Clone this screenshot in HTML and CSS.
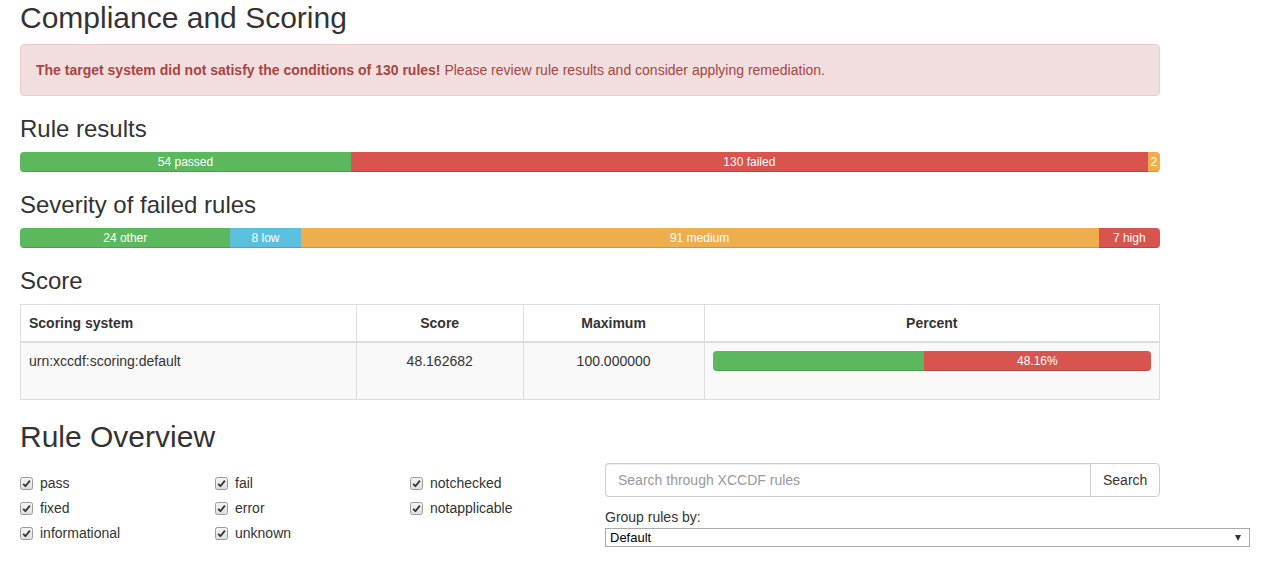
FILE: index.html
```html
<!DOCTYPE html>
<html lang="en">
<head>
<meta charset="utf-8">
<title>Compliance and Scoring</title>
<link rel="stylesheet" href="styles.css">
</head>
<body>
<main class="page">
  <h2 class="title first">Compliance and Scoring</h2>
  <div class="alert"><strong>The target system did not satisfy the conditions of 130 rules!</strong> Please review rule results and consider applying remediation.</div>

  <h3 class="subtitle">Rule results</h3>
  <div class="progress">
    <div class="bar success" style="width: 29.032%">54 passed</div>
    <div class="bar danger" style="width: 69.892%">130 failed</div>
    <div class="bar warning" style="width: 1.076%">2</div>
  </div>

  <h3 class="subtitle">Severity of failed rules</h3>
  <div class="progress">
    <div class="bar success" style="width: 18.462%">24 other</div>
    <div class="bar info" style="width: 6.154%">8 low</div>
    <div class="bar warning" style="width: 70%">91 medium</div>
    <div class="bar danger" style="width: 5.385%">7 high</div>
  </div>

  <h3 class="subtitle">Score</h3>
  <table class="score-table">
    <thead>
      <tr>
        <th class="c-system">Scoring system</th>
        <th class="c-score center">Score</th>
        <th class="c-max center">Maximum</th>
        <th class="c-pct center">Percent</th>
      </tr>
    </thead>
    <tbody>
      <tr>
        <td>urn:xccdf:scoring:default</td>
        <td class="center">48.162682</td>
        <td class="center">100.000000</td>
        <td>
          <div class="progress in-cell">
            <div class="bar success" style="width: 48.16%"></div>
            <div class="bar danger" style="width: 51.84%">48.16%</div>
          </div>
        </td>
      </tr>
    </tbody>
  </table>

  <h2 class="title">Rule Overview</h2>
  <div class="overview">
    <div class="filters">
      <label class="check"><span class="box"><svg viewBox="0 0 13 13" width="13" height="13"><defs><linearGradient id="g" x1="0" y1="0" x2="0" y2="1"><stop offset="0" stop-color="#f4f4f4"/><stop offset="1" stop-color="#dedede"/></linearGradient></defs><rect x="0.5" y="0.5" width="12" height="12" rx="2" fill="url(#g)" stroke="#9a9a9a"/><path d="M3.2 6.8 L5.4 9.2 L9.9 3.6" fill="none" stroke="#333" stroke-width="1.8" stroke-linejoin="round"/></svg></span>pass</label>
      <label class="check"><span class="box"><svg viewBox="0 0 13 13" width="13" height="13"><rect x="0.5" y="0.5" width="12" height="12" rx="2" fill="url(#g)" stroke="#9a9a9a"/><path d="M3.2 6.8 L5.4 9.2 L9.9 3.6" fill="none" stroke="#333" stroke-width="1.8" stroke-linejoin="round"/></svg></span>fail</label>
      <label class="check"><span class="box"><svg viewBox="0 0 13 13" width="13" height="13"><rect x="0.5" y="0.5" width="12" height="12" rx="2" fill="url(#g)" stroke="#9a9a9a"/><path d="M3.2 6.8 L5.4 9.2 L9.9 3.6" fill="none" stroke="#333" stroke-width="1.8" stroke-linejoin="round"/></svg></span>notchecked</label>
      <label class="check"><span class="box"><svg viewBox="0 0 13 13" width="13" height="13"><rect x="0.5" y="0.5" width="12" height="12" rx="2" fill="url(#g)" stroke="#9a9a9a"/><path d="M3.2 6.8 L5.4 9.2 L9.9 3.6" fill="none" stroke="#333" stroke-width="1.8" stroke-linejoin="round"/></svg></span>fixed</label>
      <label class="check"><span class="box"><svg viewBox="0 0 13 13" width="13" height="13"><rect x="0.5" y="0.5" width="12" height="12" rx="2" fill="url(#g)" stroke="#9a9a9a"/><path d="M3.2 6.8 L5.4 9.2 L9.9 3.6" fill="none" stroke="#333" stroke-width="1.8" stroke-linejoin="round"/></svg></span>error</label>
      <label class="check"><span class="box"><svg viewBox="0 0 13 13" width="13" height="13"><rect x="0.5" y="0.5" width="12" height="12" rx="2" fill="url(#g)" stroke="#9a9a9a"/><path d="M3.2 6.8 L5.4 9.2 L9.9 3.6" fill="none" stroke="#333" stroke-width="1.8" stroke-linejoin="round"/></svg></span>notapplicable</label>
      <label class="check"><span class="box"><svg viewBox="0 0 13 13" width="13" height="13"><rect x="0.5" y="0.5" width="12" height="12" rx="2" fill="url(#g)" stroke="#9a9a9a"/><path d="M3.2 6.8 L5.4 9.2 L9.9 3.6" fill="none" stroke="#333" stroke-width="1.8" stroke-linejoin="round"/></svg></span>informational</label>
      <label class="check"><span class="box"><svg viewBox="0 0 13 13" width="13" height="13"><rect x="0.5" y="0.5" width="12" height="12" rx="2" fill="url(#g)" stroke="#9a9a9a"/><path d="M3.2 6.8 L5.4 9.2 L9.9 3.6" fill="none" stroke="#333" stroke-width="1.8" stroke-linejoin="round"/></svg></span>unknown</label>
    </div>
    <div class="search-col">
      <div class="input-group">
        <input class="search-input" type="text" placeholder="Search through XCCDF rules">
        <button class="search-btn" type="button">Search</button>
      </div>
      <label class="group-label" for="groupby">Group rules by:</label>
      <div class="select-wrap">
        <select id="groupby" class="group-select">
          <option>Default</option>
        </select>
      </div>
    </div>
  </div>
</main>
</body>
</html>
```

FILE: styles.css
```css
* { box-sizing: border-box; }

html, body {
  margin: 0;
  padding: 0;
  background: #fff;
}

body {
  font-family: "Liberation Sans", Arial, Helvetica, sans-serif;
  font-size: 14px;
  line-height: 20px;
  color: #333;
}

.page {
  width: 1140px;
  margin-left: 20px;
}

.title {
  font-size: 30px;
  font-weight: 400;
  line-height: 33px;
  margin: 20px 0 10px;
  color: #333;
}

.title.first {
  margin-top: 1px;
}

.subtitle {
  font-size: 24px;
  font-weight: 400;
  line-height: 26px;
  margin: 20px 0 10px;
  color: #333;
}

.alert {
  padding: 15px;
  border: 1px solid #ebccd1;
  border-radius: 4px;
  background: #f2dede;
  color: #a94442;
  margin-bottom: 20px;
}

.alert strong {
  font-weight: 700;
}

.progress {
  display: flex;
  height: 20px;
  margin-bottom: 20px;
  background: #f5f5f5;
  border-radius: 4px;
  overflow: hidden;
  box-shadow: inset 0 1px 2px rgba(0, 0, 0, 0.1);
}

.bar {
  height: 100%;
  font-size: 12px;
  line-height: 20px;
  color: #fff;
  text-align: center;
  white-space: nowrap;
  overflow: hidden;
  box-shadow: inset 0 -1px 0 rgba(0, 0, 0, 0.15);
}

.bar.success { background: #5cb85c; }
.bar.danger  { background: #d9534f; }
.bar.warning { background: #f0ad4e; }
.bar.info    { background: #5bc0de; }

.score-table {
  width: 1140px;
  border-collapse: collapse;
  border-spacing: 0;
  margin-bottom: 20px;
  border: 1px solid #ddd;
}

.score-table th,
.score-table td {
  padding: 8px;
  border: 1px solid #ddd;
  vertical-align: top;
  text-align: left;
  line-height: 20px;
}

.score-table th {
  font-weight: 700;
  border-bottom-width: 2px;
  background: #fff;
}

.score-table tbody td {
  background: #f9f9f9;
}

.score-table .center { text-align: center; }

.c-system { width: 336px; }
.c-score  { width: 167px; }
.c-max    { width: 181px; }
.c-pct    { width: 456px; }

.progress.in-cell {
  margin-bottom: 20px;
}

.overview {
  display: grid;
  grid-template-columns: 585px 555px;
  align-items: start;
}

.filters {
  display: grid;
  grid-template-columns: 195px 195px 195px;
  row-gap: 5px;
  padding-top: 10px;
}

.check {
  display: flex;
  align-items: center;
  height: 20px;
  padding-left: 20px;
  position: relative;
  font-weight: 400;
  cursor: pointer;
}

.box {
  display: inline-block;
  width: 13px;
  height: 13px;
  margin-left: -20px;
  margin-right: 7px;
  margin-top: 1px;
}

.box svg {
  display: block;
}

.input-group {
  display: flex;
  height: 34px;
}

.search-input {
  flex: 1;
  height: 34px;
  padding: 6px 12px;
  font-family: inherit;
  font-size: 14px;
  color: #555;
  border: 1px solid #ccc;
  border-right: 0;
  border-radius: 4px 0 0 4px;
  box-shadow: inset 0 1px 1px rgba(0, 0, 0, 0.075);
  outline: none;
}

.search-input::placeholder {
  color: #999;
}

.search-btn {
  width: 70px;
  height: 34px;
  padding: 6px 12px;
  font-family: inherit;
  font-size: 14px;
  color: #333;
  background: #fff;
  border: 1px solid #ccc;
  border-radius: 0 4px 4px 0;
}

.group-label {
  display: block;
  margin-top: 10px;
  line-height: 20px;
  font-weight: 400;
}

.select-wrap {
  position: relative;
  width: 645px;
  margin-top: 1px;
}

.select-wrap::after {
  content: "";
  position: absolute;
  right: 9px;
  top: 7px;
  width: 0;
  height: 0;
  border-left: 3.5px solid transparent;
  border-right: 3.5px solid transparent;
  border-top: 6px solid #333;
  pointer-events: none;
}

.group-select {
  appearance: none;
  -webkit-appearance: none;
  display: block;
  width: 645px;
  height: 19px;
  padding: 0 4px;
  font-family: "Liberation Sans", Arial, sans-serif;
  font-size: 13px;
  line-height: 17px;
  color: #000;
  background: #fff;
  border: 1px solid #a9a9a9;
  border-radius: 0;
}
```
